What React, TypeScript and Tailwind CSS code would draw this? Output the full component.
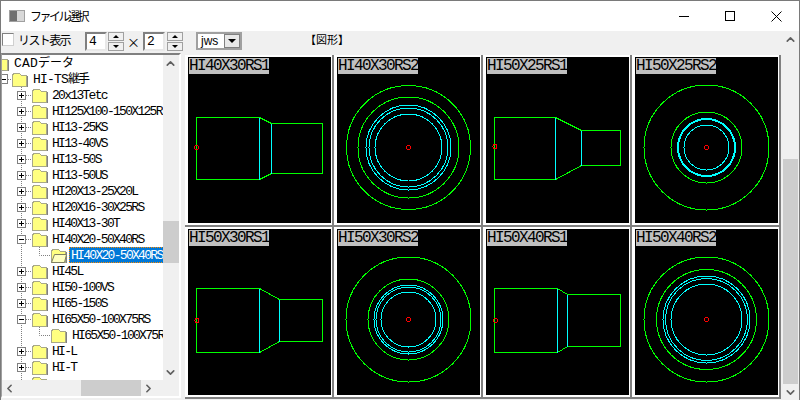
import { ChevronDown, ChevronLeft, ChevronRight, ChevronUp } from "lucide-react";

const GREEN = "#00ff00";
const CYAN = "#00ffff";
const RED = "#ff0000";

type TreeRow = {
  label: string;
  jp?: string;
  level: number;
  state?: "plus" | "minus";
  selected?: boolean;
};

const treeRows: TreeRow[] = [
  { label: "CAD", jp: "データ", level: -1 },
  { label: "HI-TS", jp: "継手", level: 0, state: "minus" },
  { label: "20x13Tetc", level: 1, state: "plus" },
  { label: "HI125X100-150X125R", level: 1, state: "plus" },
  { label: "HI13-25KS", level: 1, state: "plus" },
  { label: "HI13-40VS", level: 1, state: "plus" },
  { label: "HI13-50S", level: 1, state: "plus" },
  { label: "HI13-50US", level: 1, state: "plus" },
  { label: "HI20X13-25X20L", level: 1, state: "plus" },
  { label: "HI20X16-30X25RS", level: 1, state: "plus" },
  { label: "HI40X13-30T", level: 1, state: "plus" },
  { label: "HI40X20-50X40RS", level: 1, state: "minus" },
  { label: "HI40X20-50X40RS", level: 2, selected: true },
  { label: "HI45L", level: 1, state: "plus" },
  { label: "HI50-100VS", level: 1, state: "plus" },
  { label: "HI65-150S", level: 1, state: "plus" },
  { label: "HI65X50-100X75RS", level: 1, state: "minus" },
  { label: "HI65X50-100X75RS", level: 2 },
  { label: "HI-L", level: 1, state: "plus" },
  { label: "HI-T", level: 1, state: "plus" },
  { label: "", level: 1 },
];

type Side = { a: number[]; b: number[]; mark: number[] };
type Front = { green: number[]; cyan: number[]; thick?: number };

type Cell = { name: string; side?: Side; front?: Front };

// 座標はセル内のピクセル
const cells: Cell[] = [
  { name: "HI40X30RS1", side: { a: [8.5, 71.5, 60.5, 122.5], b: [83.5, 134.5, 66.5, 116.5], mark: [8.5, 90.5] } },
  { name: "HI40X30RS2", front: { green: [62, 50.5], cyan: [42.5, 39.5, 33.5] } },
  { name: "HI50X25RS1", side: { a: [8.5, 69.5, 60.5, 122.5], b: [95.5, 134.5, 73.5, 108.5], mark: [9, 89.5] } },
  { name: "HI50X25RS2", front: { green: [62.5, 35.5], cyan: [28.5, 22.5], thick: 28.5 } },
  { name: "HI50X30RS1", side: { a: [8.5, 71.5, 59.5, 123.5], b: [91.5, 134.5, 70.5, 112.5], mark: [9, 91.5] } },
  { name: "HI50X30RS2", front: { green: [62.5, 40.5], cyan: [34.5, 32.5, 27.5] } },
  { name: "HI50X40RS1", side: { a: [8.5, 71.5, 59.5, 123.5], b: [81.5, 134.5, 65.5, 117.5], mark: [9.5, 91.5] } },
  { name: "HI50X40RS2", front: { green: [62.5, 50], cyan: [43.5, 41, 35.5] } },
];

function Drawing({ cell }: { cell: Cell }) {
  return (
    <svg width={143} height={166} className="block" shapeRendering="crispEdges" fill="none">
      {cell.side && (
        <>
          <path
            d={`M${cell.side.a[1]} ${cell.side.a[2]}H${cell.side.a[0]}V${cell.side.a[3]}H${cell.side.a[1]}L${cell.side.b[0]} ${cell.side.b[3]}H${cell.side.b[1]}V${cell.side.b[2]}H${cell.side.b[0]}Z`}
            stroke={GREEN}
          />
          <path
            d={`M${cell.side.a[1]} ${cell.side.a[2]}V${cell.side.a[3]}M${cell.side.b[0]} ${cell.side.b[2]}V${cell.side.b[3]}`}
            stroke={CYAN}
          />
          <circle cx={cell.side.mark[0]} cy={cell.side.mark[1]} r={2} stroke={RED} />
        </>
      )}
      {cell.front && (
        <>
          {cell.front.green.map((r) => (
            <circle key={r} cx={71.5} cy={90.5} r={r} stroke={GREEN} />
          ))}
          {cell.front.cyan.map((r) => (
            <circle key={r} cx={71.5} cy={90.5} r={r} stroke={CYAN} strokeWidth={r === cell.front?.thick ? 2 : 1} />
          ))}
          <circle cx={71.5} cy={90.5} r={2} stroke={RED} />
        </>
      )}
    </svg>
  );
}

function Folder({ x, open }: { x: number; open?: boolean }) {
  return (
    <g transform={`translate(${x} 0)`} shapeRendering="crispEdges">
      <path d="M0.5 5.5V3.5L2.5 2.5H7.5L9.5 4.5H14.5V15.5H0.5Z" fill="#ffff80" stroke="#a8a888" />
      <path d="M15.5 5V16H1" stroke="#808080" fill="none" />
      {open && <path d="M3.5 7.5H15.5L13.5 15.5H0.5Z" fill="#ffffc0" stroke="#808060" shapeRendering="auto" />}
    </g>
  );
}

function Gutter({ row, index }: { row: TreeRow; index: number }) {
  const widths: Record<number, number> = { [-1]: 12, 0: 31, 1: 50, 2: 66 };
  const width = widths[row.level];
  const dots = { stroke: "#808080", strokeDasharray: "1 1" };
  return (
    <svg width={width} height={16} className="shrink-0" fill="none">
      {row.level === -1 && <Folder x={-9} />}
      {row.level === 0 && (
        <>
          <path d="M6 8.5H10" {...dots} />
          <rect x={-3.5} y={3.5} width={9} height={9} fill="#fff" stroke="#808080" />
          <path d="M-2 8.5H4" stroke="#000" />
          <Folder x={10} />
        </>
      )}
      {index > 1 && <path d="M19.5 0V16" {...dots} />}
      {row.level === 1 && (
        <>
          <path d="M24 8.5H29" {...dots} />
          {row.state && (
            <>
              <rect x={15.5} y={4.5} width={8} height={8} fill="#fff" stroke="#808080" />
              <path d="M17 8.5H22" stroke="#000" />
              {row.state === "plus" && <path d="M19.5 6V11" stroke="#000" />}
            </>
          )}
          <Folder x={30} />
        </>
      )}
      {row.level === 2 && (
        <>
          <path d="M37.5 0V8.5H48" {...dots} />
          <Folder x={49} open={row.selected} />
        </>
      )}
    </svg>
  );
}

function Spinner() {
  return (
    <div className="w-[16px] h-[19px] flex flex-col gap-[1px]">
      {[0, 1].map((i) => (
        <div key={i} className="flex-1 bg-[#f0f0f0] border border-[#a0a0a0] flex items-center justify-center">
          <div
            className={
              i === 0
                ? "w-0 h-0 border-x-[3px] border-x-transparent border-b-[3px] border-b-black"
                : "w-0 h-0 border-x-[3px] border-x-transparent border-t-[3px] border-t-black"
            }
          />
        </div>
      ))}
    </div>
  );
}

const sans = { fontFamily: '"Noto Sans CJK JP", "Liberation Sans", sans-serif' };
const mono = { fontFamily: '"Liberation Mono", "Noto Sans CJK JP", monospace' };

function NumberBox({ value }: { value: string }) {
  return (
    <div
      className="w-[22px] h-[19px] bg-white border-2 border-t-[#808080] border-l-[#808080] border-r-[#e8e8e8] border-b-[#e8e8e8] pl-[2px] text-[13px] leading-[15px] text-black"
      style={mono}
    >
      {value}
    </div>
  );
}

function ScrollButton({ children }: { children: React.ReactNode }) {
  return <div className="w-[15px] h-[16px] shrink-0 flex items-center justify-center text-[#606060]">{children}</div>;
}

// 上の2行だけ文字の幅が広い
function TreeLabel({ row }: { row: TreeRow }) {
  if (row.level === -1) {
    return (
      <span className="mt-[1px] leading-[16px] tracking-[0.2px]">
        {row.label}
        <span className="text-[12px] tracking-normal">{row.jp}</span>
      </span>
    );
  }
  if (row.level === 0) {
    return (
      <span className="mt-[1px] leading-[16px] tracking-[-0.8px]">
        {row.label}
        <span className="text-[12px] tracking-[-2px]">{row.jp}</span>
      </span>
    );
  }
  return <span className={row.level === 2 ? "pl-[4px] mt-[1px] leading-[16px]" : "mt-[1px] leading-[16px]"}>{row.label}</span>;
}

export default function App() {
  return (
    <div className="w-[800px] h-[400px] overflow-hidden bg-[#f0f0f0] border border-b-0 border-[#7a7a7a] text-black" style={sans}>
      {/* Title bar */}
      <div className="h-[30px] bg-white flex items-center">
        <div className="ml-[8px] w-[16px] h-[12px] bg-[#d8d8d8] border border-[#a0a0a0] flex">
          <div className="w-[7px] bg-[#707070]" />
        </div>
        <span className="ml-[5px] text-[12px] tracking-[-2.5px]">ファイル選択</span>
        <div className="ml-auto flex items-center h-full">
          <div className="w-[46px] flex justify-center">
            <div className="w-[10px] h-[1px] bg-black" />
          </div>
          <div className="w-[46px] flex justify-center">
            <div className="w-[10px] h-[10px] border border-black" />
          </div>
          <div className="w-[46px] flex justify-center">
            <svg width="11" height="11" stroke="#000" fill="none">
              <path d="M0.5 0.5L10.5 10.5M10.5 0.5L0.5 10.5" />
            </svg>
          </div>
        </div>
      </div>

      <div className="flex h-[369px]">
        <div className="w-[782px] shrink-0">
          {/* Toolbar */}
          <div className="h-[22px] flex items-start pt-[1px]">
            <div className="ml-[1px] mt-[1px] w-[12px] h-[13px] bg-white border border-t-[#808080] border-l-[#808080] border-r-[#d0d0d0] border-b-[#d0d0d0]" />
            <span className="ml-[4px] text-[12px] leading-[15px] tracking-[-1.6px]">リスト表示</span>
            <div className="ml-[15px]">
              <NumberBox value="4" />
            </div>
            <div className="ml-[1px]">
              <Spinner />
            </div>
            <span className="ml-[3px] w-[16px] text-[13px] leading-[20px]">×</span>
            <NumberBox value="2" />
            <div className="ml-[2px]">
              <Spinner />
            </div>
            <div className="ml-[13px] w-[46px] h-[18px] bg-white border-2 border-[#a0a0a0] flex items-center">
              <span className="pl-[3px] text-[12px] leading-[14px] flex-1" style={{ fontFamily: '"Liberation Sans", sans-serif' }}>jws</span>
              <div className="w-[16px] h-[14px] bg-[#e8e8e8] border border-[#808080] flex items-center justify-center">
                <div className="w-0 h-0 border-x-[4px] border-x-transparent border-t-[4px] border-t-black" />
              </div>
            </div>
            <span className="ml-[63px] text-[11px] leading-[15px]">【図形】</span>
          </div>

          <div className="flex h-[347px]">
            {/* Tree */}
            <div className="w-[180px] h-[345px] shrink-0 border-l border-t-2 border-r-2 border-b-2 border-t-[#808080] border-l-[#a0a0a0] border-r-white border-b-white flex flex-col">
              <div className="flex h-[325px]">
                <div className="w-[161px] bg-white overflow-hidden">
                  {treeRows.map((row, i) => (
                    <div key={i} className="h-[16px] flex items-center whitespace-nowrap text-[13px] tracking-[-1.7px]" style={mono}>
                      <Gutter row={row} index={i} />
                      {row.selected ? (
                        <span className="bg-[#0078d7] text-white flex-1 h-[16px] leading-[15px] pl-[1px] ml-[1px] border border-dotted border-[#ff8a00]">
                          {row.label}
                        </span>
                      ) : (
                        <TreeLabel row={row} />
                      )}
                    </div>
                  ))}
                </div>
                <div className="w-[16px] flex flex-col">
                  <ScrollButton>
                    <ChevronUp size={13} strokeWidth={3} />
                  </ScrollButton>
                  <div className="h-[150px]" />
                  <div className="h-[42px] bg-[#cdcdcd]" />
                  <div className="flex-1" />
                  <ScrollButton>
                    <ChevronDown size={13} strokeWidth={3} />
                  </ScrollButton>
                </div>
              </div>
              <div className="h-[16px] flex">
                <ScrollButton>
                  <ChevronLeft size={13} strokeWidth={3} />
                </ScrollButton>
                <div className="w-[64px]" />
                <div className="w-[60px] bg-[#cdcdcd]" />
                <div className="flex-1" />
                <ScrollButton>
                  <ChevronRight size={13} strokeWidth={3} />
                </ScrollButton>
                <div className="w-[23px]" />
              </div>
            </div>

            {/* Thumbnails */}
            <div className="ml-[4px] mt-[2px] grid grid-cols-[repeat(4,149px)] grid-rows-[repeat(2,172px)]">
              {cells.map((cell) => (
                <div key={cell.name} className="border-r-2 border-b-2 border-[#808080]">
                  <div className="relative border-l-[3px] border-t-2 border-r border-b-2 border-white bg-black">
                    <Drawing cell={cell} />
                    <span
                      className="absolute left-[1px] top-[1px] w-[80px] h-[16px] bg-[#c0c0c0] text-[16px] leading-[16px] tracking-[-1.6px] text-black"
                      style={mono}
                    >
                      {cell.name}
                    </span>
                  </div>
                </div>
              ))}
            </div>
          </div>
        </div>

        {/* Page scrollbar */}
        <div className="w-[15px] flex flex-col">
          <ScrollButton>
            <ChevronUp size={13} strokeWidth={3} />
          </ScrollButton>
          <div className="h-[112px]" />
          <div className="flex-1 bg-[#cdcdcd]" />
          <ScrollButton>
            <ChevronDown size={13} strokeWidth={3} />
          </ScrollButton>
        </div>
      </div>
    </div>
  );
}
